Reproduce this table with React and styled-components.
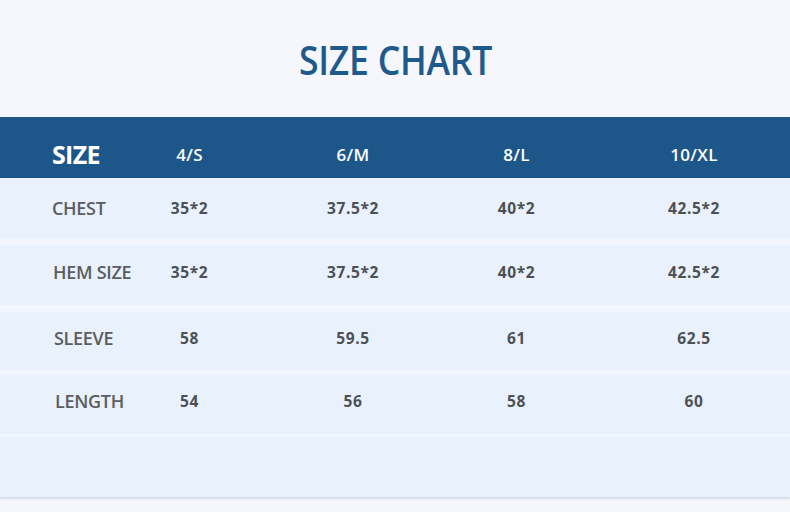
import React from "react";
import styled, { createGlobalStyle } from "styled-components";

const GlobalStyle = createGlobalStyle`
  html, body {
    margin: 0;
    padding: 0;
    background: #f6f7fd;
  }
`;

const Page = styled.div`
  width: 790px;
  height: 512px;
  overflow: hidden;
  background: #f6f7fd;
  font-family: "Open Sans", sans-serif;
`;

const TitleBar = styled.div`
  height: 117px;
  display: flex;
  align-items: center;
  justify-content: center;
`;

const Title = styled.h1`
  margin: 2px 0 0;
  font-size: 40px;
  font-weight: 600;
  color: #1f5a8d;
  letter-spacing: -0.3px;
  transform: scaleX(0.89);
`;

const Table = styled.div`
  display: flex;
  flex-direction: column;
  background: #f1f5fd;
  box-shadow: 0 2px 2px rgba(120, 130, 150, 0.25);
`;

const Row = styled.div`
  display: grid;
  grid-template-columns: 108px 163px 164px 163px 192px;
  align-items: center;
  height: ${({ h }) => h || 60}px;
  margin-bottom: ${({ gap }) => gap || 0}px;
  padding-bottom: ${({ lift }) => lift || 0}px;
  box-sizing: border-box;
  background: #e9f1fc;
`;

const HeaderRow = styled(Row)`
  height: 61px;
  padding-top: 13px;
  background: #1d578a;
  color: #ffffff;
`;

const HeadLabel = styled.div`
  padding-left: 52px;
  font-size: 25px;
  font-weight: 700;
  letter-spacing: -0.7px;
  white-space: nowrap;
`;

const HeadCell = styled.div`
  text-align: center;
  font-size: 17px;
  font-weight: 600;
  letter-spacing: 0.3px;
`;

const Label = styled.div`
  padding-left: ${({ indent }) => indent || 52}px;
  font-size: 18px;
  font-weight: 600;
  letter-spacing: -0.3px;
  color: #5a5d61;
  white-space: nowrap;
`;

const Cell = styled.div`
  text-align: center;
  font-size: 15.5px;
  font-weight: 700;
  letter-spacing: 0.6px;
  color: #4d5054;
`;

const sizes = ["4/S", "6/M", "8/L", "10/XL"];

const rows = [
  { label: "CHEST", values: ["35*2", "37.5*2", "40*2", "42.5*2"], gap: 7, lift: 0, indent: 52 },
  { label: "HEM SIZE", values: ["35*2", "37.5*2", "40*2", "42.5*2"], gap: 7, lift: 6, indent: 53 },
  { label: "SLEEVE", values: ["58", "59.5", "61", "62.5"], gap: 5, h: 58, lift: 6, indent: 54 },
  { label: "LENGTH", values: ["54", "56", "58", "60"], gap: 3, h: 59, lift: 7, indent: 55 },
];

export default function App() {
  return (
    <Page>
      <GlobalStyle />
      <TitleBar>
        <Title>SIZE CHART</Title>
      </TitleBar>
      <Table>
        <HeaderRow>
          <HeadLabel>SIZE</HeadLabel>
          {sizes.map((s) => (
            <HeadCell key={s}>{s}</HeadCell>
          ))}
        </HeaderRow>
        {rows.map((r) => (
          <Row key={r.label} h={r.h} gap={r.gap} lift={r.lift}>
            <Label indent={r.indent}>{r.label}</Label>
            {r.values.map((v, i) => (
              <Cell key={i}>{v}</Cell>
            ))}
          </Row>
        ))}
        <Row h={60} />
      </Table>
    </Page>
  );
}
